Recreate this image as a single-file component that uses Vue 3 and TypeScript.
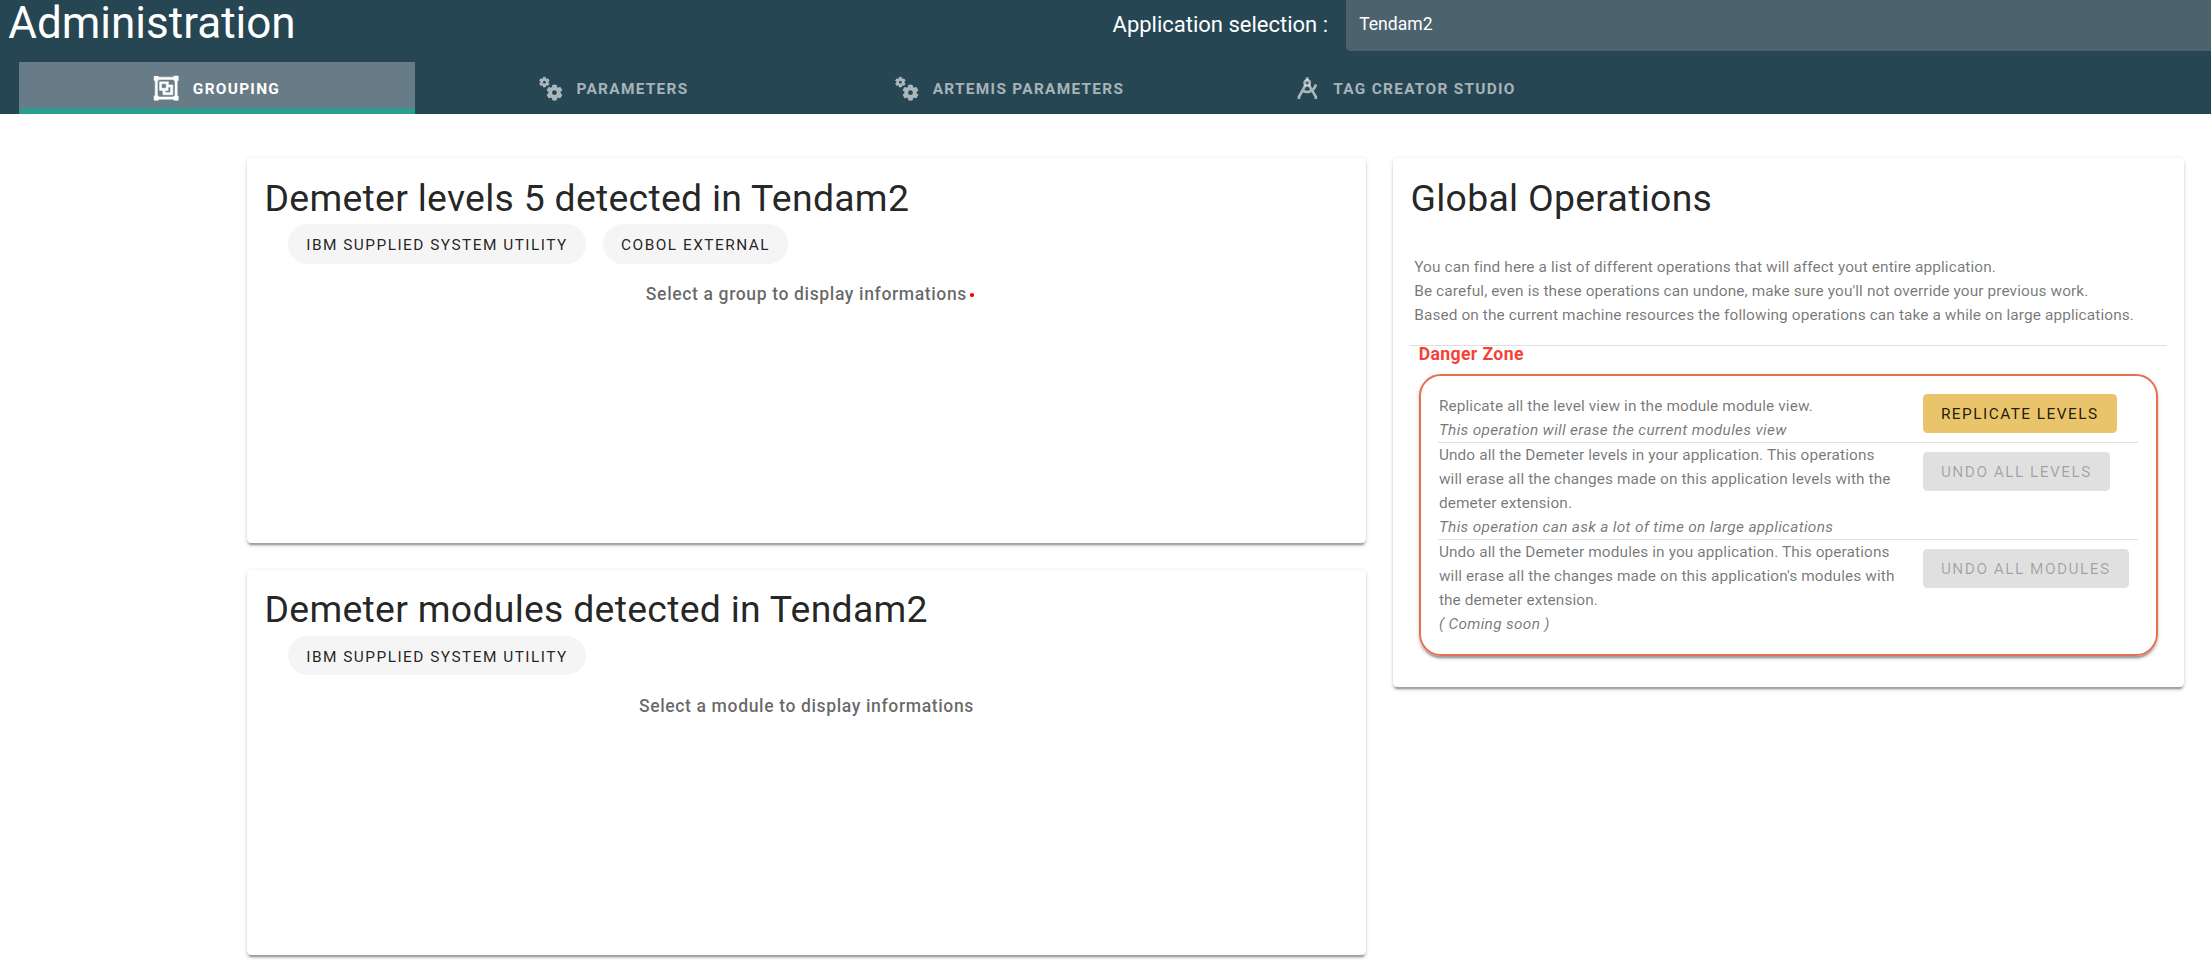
<script setup lang="ts">
interface Tab { label: string; icon: 'group' | 'cogs' | 'compass' }
interface Operation { text: string; note: string; action: string; enabled: boolean }

const application = 'Tendam2'
const activeTab = 'Grouping'

const tabs: Tab[] = [
  { label: 'Grouping', icon: 'group' },
  { label: 'Parameters', icon: 'cogs' },
  { label: 'Artemis parameters', icon: 'cogs' },
  { label: 'Tag Creator Studio', icon: 'compass' },
]

const panels = [
  { title: `Demeter levels 5 detected in ${application}`, groups: ['IBM supplied system utility', 'COBOL External'], hint: 'Select a group to display informations', marker: true },
  { title: `Demeter modules detected in ${application}`, groups: ['IBM supplied system utility'], hint: 'Select a module to display informations', marker: false },
]

const intro = [
  'You can find here a list of different operations that will affect yout entire application.',
  "Be careful, even is these operations can undone, make sure you'll not override your previous work.",
  'Based on the current machine resources the following operations can take a while on large applications.',
]

const operations: Operation[] = [
  { text: 'Replicate all the level view in the module module view.', note: 'This operation will erase the current modules view', action: 'Replicate levels', enabled: true },
  { text: 'Undo all the Demeter levels in your application. This operations will erase all the changes made on this application levels with the demeter extension.', note: 'This operation can ask a lot of time on large applications', action: 'Undo all levels', enabled: false },
  { text: "Undo all the Demeter modules in you application. This operations will erase all the changes made on this application's modules with the demeter extension.", note: '( Coming soon )', action: 'Undo all modules', enabled: false },
]
</script>

<template>
  <div class="app">
    <header class="header">
      <div class="toolbar">
        <h1 class="toolbar-title">Administration</h1>
        <span class="selector-label">Application selection :</span>
        <div class="selector">{{ application }}</div>
      </div>
      <nav class="tabs">
        <a v-for="tab in tabs" :key="tab.label" class="tab" :class="{ active: tab.label === activeTab }">
          <svg class="icon" viewBox="0 0 24 24" aria-hidden="true">
            <path v-if="tab.icon === 'group'" fill="currentColor" fill-rule="evenodd" stroke="currentColor" stroke-width=".5" d="M1,1V5H2V19H1V23H5V22H19V23H23V19H22V5H23V1H19V2H5V1M5,4H19V5H20V19H19V20H5V19H4V5H5M6,6V14H9V18H18V9H14V6M8,8H12V12H8M14,11H16V16H11V14H14" />
            <path v-else-if="tab.icon === 'cogs'" fill="currentColor" fill-rule="evenodd" stroke="currentColor" stroke-width=".5" d="M15.9,18.45C17.25,18.45 18.35,17.35 18.35,16C18.35,14.65 17.25,13.55 15.9,13.55C14.54,13.55 13.45,14.65 13.45,16C13.45,17.35 14.54,18.45 15.9,18.45M21.1,16.68L22.58,17.84C22.71,17.95 22.75,18.13 22.66,18.29L21.26,20.71C21.17,20.86 21,20.92 20.83,20.86L19.09,20.16C18.73,20.44 18.33,20.67 17.91,20.85L17.64,22.7C17.62,22.87 17.47,23 17.3,23H14.5C14.32,23 14.18,22.87 14.15,22.7L13.89,20.85C13.46,20.67 13.07,20.44 12.71,20.16L10.96,20.86C10.81,20.92 10.62,20.86 10.54,20.71L9.14,18.29C9.05,18.13 9.09,17.95 9.22,17.84L10.7,16.68L10.65,16L10.7,15.31L9.22,14.16C9.09,14.05 9.05,13.86 9.14,13.71L10.54,11.29C10.62,11.13 10.81,11.07 10.96,11.13L12.71,11.84C13.07,11.56 13.46,11.32 13.89,11.15L14.15,9.29C14.18,9.13 14.32,9 14.5,9H17.3C17.47,9 17.62,9.13 17.64,9.29L17.91,11.15C18.33,11.32 18.73,11.56 19.09,11.84L20.83,11.13C21,11.07 21.17,11.13 21.26,11.29L22.66,13.71C22.75,13.86 22.71,14.05 22.58,14.16L21.1,15.31L21.15,16L21.1,16.68M6.69,8.07C7.56,8.07 8.26,7.37 8.26,6.5C8.26,5.63 7.56,4.92 6.69,4.92A1.58,1.58 0 0,0 5.11,6.5C5.11,7.37 5.82,8.07 6.69,8.07M10.03,6.94L11,7.68C11.07,7.75 11.09,7.87 11.03,7.97L10.13,9.53C10.08,9.63 9.96,9.67 9.86,9.63L8.74,9.18L8,9.62L7.81,10.81C7.79,10.92 7.7,11 7.59,11H5.79C5.67,11 5.58,10.92 5.56,10.81L5.4,9.62L4.64,9.18L3.5,9.63C3.41,9.67 3.3,9.63 3.24,9.53L2.34,7.97C2.28,7.87 2.31,7.75 2.39,7.68L3.34,6.94L3.31,6.5L3.34,6.06L2.39,5.32C2.31,5.25 2.28,5.13 2.34,5.03L3.24,3.47C3.3,3.37 3.41,3.33 3.5,3.37L4.63,3.82L5.4,3.38L5.56,2.19C5.58,2.08 5.67,2 5.79,2H7.59C7.7,2 7.79,2.08 7.81,2.19L8,3.38L8.74,3.82L9.86,3.37C9.96,3.33 10.08,3.37 10.13,3.47L11.03,5.03C11.09,5.13 11.07,5.25 11,5.32L10.03,6.06L10.06,6.5L10.03,6.94Z" />
            <g v-else fill="none" stroke="currentColor" stroke-width="2.5">
              <path d="M12 2V5M10.6 9L4.5 19.8V21.8M13.4 9L19.9 19.8V21.8M7.8 14.2C12.5 17 18 14.6 20 8.6" />
              <circle cx="12" cy="7.2" r="2.3" />
            </g>
          </svg>
          <span class="tab-label">{{ tab.label }}</span>
        </a>
      </nav>
    </header>

    <main class="content">
      <div class="column">
        <section v-for="panel in panels" :key="panel.title" class="card panel">
          <h2 class="card-title">{{ panel.title }}</h2>
          <div class="chips">
            <button v-for="group in panel.groups" :key="group" class="chip">{{ group }}</button>
          </div>
          <p class="hint"><span class="hint-text">{{ panel.hint }}<i v-if="panel.marker" class="marker"></i></span></p>
        </section>
      </div>

      <section class="card operations">
        <h2 class="card-title">Global Operations</h2>
        <div class="intro">
          <p v-for="line in intro" :key="line">{{ line }}</p>
        </div>
        <hr class="divider">
        <h3 class="danger-title">Danger Zone</h3>
        <div class="danger">
          <div v-for="op in operations" :key="op.action" class="operation">
            <p class="operation-text">{{ op.text }}<br><em>{{ op.note }}</em></p>
            <button class="action" :disabled="!op.enabled">{{ op.action }}</button>
          </div>
        </div>
      </section>
    </main>
  </div>
</template>

<style scoped>
.app {
  zoom: 1.1;
  width: 2010px;
  height: 890px;
  overflow: hidden;
  background: #fff;
  color: rgba(0, 0, 0, .87);
  font-family: Roboto, sans-serif;
}
.app *, .app { box-sizing: border-box; }
h1, h2, h3, p { margin: 0; font-weight: 400; }
button { border: 0; font-family: inherit; }

.header {
  height: 104px;
  background: #264653;
  color: #fff;
}
.toolbar {
  display: flex;
  align-items: flex-start;
  height: 56px;
  padding-left: 7.5px;
}
.toolbar-title {
  width: 1003.9px;
  font-size: 40px;
  line-height: 42.4px;
}
.selector-label {
  width: 212.2px;
  font-size: 20px;
  line-height: 45px;
}
.selector {
  flex: 1;
  height: 46.4px;
  padding-left: 12px;
  border-radius: 0 0 0 4px;
  background: #4c636e;
  font-size: 16px;
  line-height: 44px;
}
.tabs {
  display: flex;
  height: 48px;
  padding-left: 17px;
}
.tab {
  display: flex;
  align-items: center;
  justify-content: center;
  gap: 12px;
  width: 360px;
  color: rgba(255, 255, 255, .6);
  font-size: 14px;
  font-weight: 700;
  letter-spacing: .084em;
  text-transform: uppercase;
}
.tab.active {
  background: #677c86;
  box-shadow: inset 0 -5.5px #2a9d8f;
  color: #fff;
}
.tab-label { padding-top: 1.6px; }
.icon { width: 24px; height: 24px; }

.content {
  display: grid;
  grid-template-columns: 1017.3px 719.1px;
  gap: 24.5px;
  align-items: start;
  padding: 39.6px 0 0 224.5px;
}
.column { display: grid; gap: 24.5px; }
.card {
  border-radius: 4px;
  background: #fff;
  box-shadow: 0 3px 1px -2px rgba(0, 0, 0, .2), 0 2px 2px 0 rgba(0, 0, 0, .14), 0 1px 5px 0 rgba(0, 0, 0, .12);
}
.panel { height: 350px; padding-top: 16px; }
.card-title {
  padding-left: 16px;
  font-size: 34px;
  line-height: 41px;
  letter-spacing: .0073529em;
}
.chips {
  display: flex;
  gap: 15.5px;
  padding: 3px 0 0 37.4px;
}
.chip {
  height: 36px;
  padding: 1.6px 16.5px 0;
  border-radius: 18px;
  background: #f5f5f5;
  color: rgba(0, 0, 0, .87);
  font-size: 14px;
  font-weight: 400;
  letter-spacing: .0965em;
  text-transform: uppercase;
}
.hint {
  margin-top: 16.3px;
  color: rgba(0, 0, 0, .6);
  font-size: 16px;
  line-height: 24px;
  letter-spacing: .0345em;
  text-align: center;
}
.hint-text { position: relative; font-weight: 500; }
.marker {
  position: absolute;
  right: -6.4px;
  top: 8px;
  width: 3.4px;
  height: 3.4px;
  border-radius: 50%;
  background: red;
}

.operations { height: 481px; padding-top: 16px; }
.intro {
  height: 82px;
  margin-top: 31px;
  padding-left: 19.4px;
  color: rgba(0, 0, 0, .55);
  font-size: 14px;
  line-height: 22px;
  letter-spacing: .0071429em;
}
.divider {
  height: 1px;
  margin: 0 15.5px;
  border: 0;
  background: rgba(0, 0, 0, .12);
}
.danger-title {
  height: 25.4px;
  padding-left: 23.4px;
  color: #f44336;
  font-size: 16px;
  font-weight: 700;
  line-height: 16px;
  letter-spacing: .0225em;
}
.danger {
  width: 671.6px;
  height: 256px;
  margin-left: 23.6px;
  padding: 16px;
  border: 2px solid #e76f51;
  border-radius: 20px;
  box-shadow: 0 3px 1px -2px rgba(0, 0, 0, .2), 0 2px 2px 0 rgba(0, 0, 0, .14), 0 1px 5px 0 rgba(0, 0, 0, .12);
}
.operation {
  display: grid;
  grid-template-columns: 440.4px 1fr;
  justify-items: start;
  align-items: start;
}
.operation + .operation { border-top: 1px solid rgba(0, 0, 0, .12); }
.operation + .operation .action { margin-top: 8px; }
.operation-text {
  width: 418.4px;
  padding-left: .4px;
  color: rgba(0, 0, 0, .55);
  font-size: 14px;
  line-height: 21.9px;
  letter-spacing: .0071429em;
}
.operation-text em { letter-spacing: .0206em; }
.action {
  height: 36px;
  padding: 1px 16.4px 0;
  border-radius: 4px;
  background: #e9c46a;
  color: rgba(0, 0, 0, .87);
  font-size: 14px;
  font-weight: 400;
  letter-spacing: .0955em;
  text-transform: uppercase;
}
.action:disabled { background: #e0e0e0; color: rgba(0, 0, 0, .28); }
</style>

<style>
body { margin: 0; overflow: hidden; }
</style>
